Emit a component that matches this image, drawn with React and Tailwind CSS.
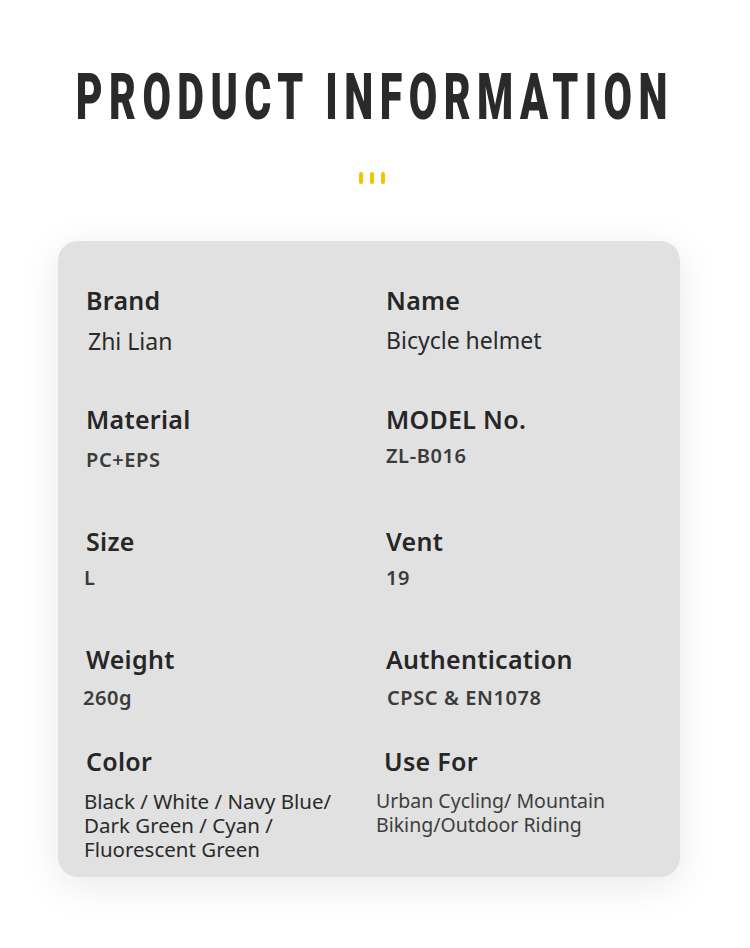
import React from 'react';

const rows = [
  {
    h: 'h-[119px]',
    left: { label: 'Brand', value: 'Zhi Lian', kind: 'big', gap: 'mt-[9px]', pad: 'ml-[2px]' },
    right: { label: 'Name', value: 'Bicycle helmet', kind: 'big', gap: 'mt-[8px]', pad: '' },
  },
  {
    h: 'h-[122px]',
    left: { label: 'Material', value: 'PC+EPS', kind: 'small', gap: 'mt-[11px]', pad: '' },
    right: { label: 'MODEL No.', value: 'ZL-B016', kind: 'small', gap: 'mt-[7px]', pad: '' },
  },
  {
    h: 'h-[118px]',
    left: { label: 'Size', value: 'L', kind: 'small', gap: 'mt-[7px]', pad: '-ml-[2px]' },
    right: { label: 'Vent', value: '19', kind: 'small', gap: 'mt-[7px]', pad: '' },
  },
  {
    h: 'h-[102px]',
    left: { label: 'Weight', value: '260g', kind: 'small', gap: 'mt-[9px]', pad: '-ml-[3px]' },
    right: { label: 'Authentication', value: 'CPSC & EN1078', kind: 'small', gap: 'mt-[9px]', pad: 'ml-[1px]' },
  },
];

function Field({ label, value, kind, gap, pad }) {
  return (
    <div>
      <div className="text-[25px] leading-[35px] tracking-[0.3px] font-semibold text-[#262626]">{label}</div>
      {kind === 'big' ? (
        <div className={`${gap} ${pad} text-[23px] leading-[28px] text-[#2a2a2a]`}>{value}</div>
      ) : (
        <div className={`${gap} ${pad} text-[20px] leading-[24px] tracking-[0.6px] font-semibold text-[#3b3b3b]`}>{value}</div>
      )}
    </div>
  );
}

export default function App() {
  return (
    <div className="w-[750px] h-[948px] bg-white overflow-hidden font-['Noto_Sans',sans-serif]">
      <div className="pt-[66px] flex flex-col items-center">
        <div className="w-[750px] h-[64px] flex justify-center">
          <h1 className="inline-block whitespace-nowrap scale-x-[0.645] font-['Roboto',sans-serif] font-black text-[64px] leading-[64px] tracking-[10px] text-[#2a2a2a]">
            PRODUCT INFORMATION
          </h1>
        </div>
        <div className="mt-[42px] mr-[6px] flex gap-[7px]">
          <span className="w-[4px] h-[12px] rounded-full bg-[#f4c300]" />
          <span className="w-[4px] h-[12px] rounded-full bg-[#f4c300]" />
          <span className="w-[4px] h-[12px] rounded-full bg-[#f4c300]" />
        </div>
      </div>

      <div className="mt-[57px] ml-[58px] w-[622px] h-[636px] rounded-[20px] bg-[#e1e1e1] shadow-[0_8px_40px_rgba(0,0,0,0.09)] pl-[28px] pt-[42px]">
        {rows.map((r, i) => (
          <div key={i} className={`grid grid-cols-[300px_1fr] ${r.h}`}>
            <Field {...r.left} />
            <Field {...r.right} />
          </div>
        ))}
        <div className="grid grid-cols-[300px_1fr]">
          <div>
            <div className="text-[25px] leading-[35px] tracking-[0.3px] font-semibold text-[#262626]">Color</div>
            <div className="mt-[10px] -ml-[2px] text-[20.5px] leading-[24px] text-[#2a2a2a]">
              Black / White / Navy Blue/
              <br />
              Dark Green / Cyan /
              <br />
              Fluorescent Green
            </div>
          </div>
          <div>
            <div className="-ml-[2px] text-[25px] leading-[35px] tracking-[0.3px] font-semibold text-[#262626]">Use For</div>
            <div className="mt-[10px] -ml-[10px] text-[19.5px] leading-[24px] text-[#3d3d3d]">
              Urban Cycling/ Mountain
              <br />
              Biking/Outdoor Riding
            </div>
          </div>
        </div>
      </div>
    </div>
  );
}
